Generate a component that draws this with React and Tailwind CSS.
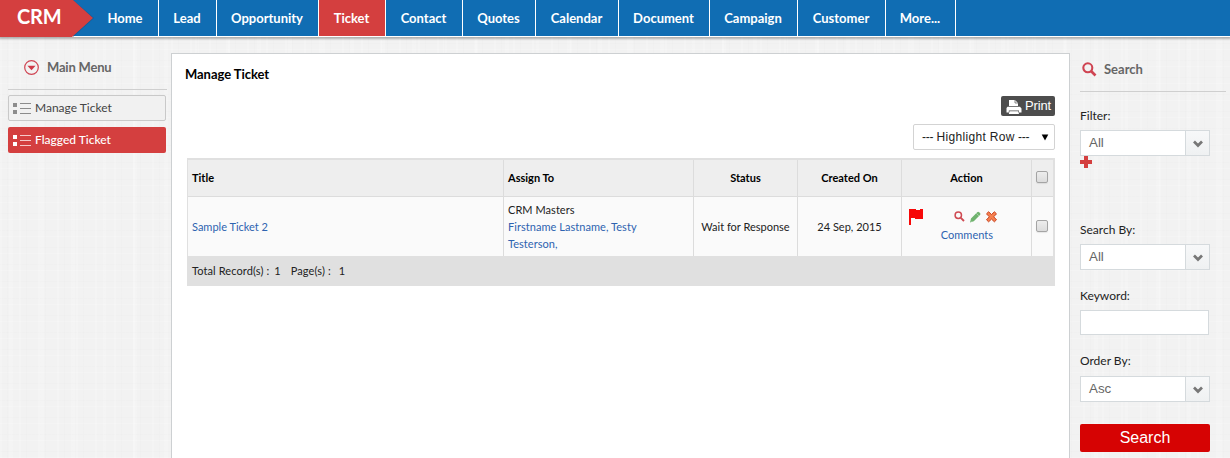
import React from "react";

const NAV = [
  { label: "Home", w: "w-[66px]" },
  { label: "Lead", w: "w-[58px]" },
  { label: "Opportunity", w: "w-[102px]" },
  { label: "Ticket", w: "w-[67px]", active: true },
  { label: "Contact", w: "w-[77px]" },
  { label: "Quotes", w: "w-[73px]" },
  { label: "Calendar", w: "w-[83px]" },
  { label: "Document", w: "w-[91px]" },
  { label: "Campaign", w: "w-[88px]" },
  { label: "Customer", w: "w-[88px]" },
  { label: "More...", w: "w-[70px]" },
];

function Header() {
  return (
    <header className="flex h-[37px] border-b border-white bg-[#106db3] shadow-[0_1px_2px_1px_rgba(0,0,0,0.28)]">
      <div className="relative h-[37px] w-[93px] shrink-0">
        <svg className="absolute inset-0" width="95" height="37" viewBox="0 0 95 37">
          <path d="M73 0L94 18L73 37Z" fill="#0c4f85" opacity="0.55" />
          <path d="M0 0H73L93 18L72 37H0Z" fill="#d43f3f" />
        </svg>
        <span className="relative block pl-[17px] text-[20px] leading-[32px] font-bold tracking-[-0.2px] text-white">CRM</span>
      </div>
      <nav className="flex h-9">
        {NAV.map((n) => (
          <a
            key={n.label}
            className={`flex h-9 items-center justify-center whitespace-nowrap border-r border-white pr-px pt-px text-[13px] font-bold text-white ${n.w} ${n.active ? "bg-[#d43f3f]" : ""}`}
          >
            {n.label}
          </a>
        ))}
      </nav>
    </header>
  );
}

function ListIcon({ color, line }) {
  return (
    <svg width="18" height="12" viewBox="0 0 18 12" shapeRendering="crispEdges">
      <path d="M0 1h4v4H0zM0 8h4v4H0z" fill={color} />
      <path d="M7 1h11v1H7zM7 6h11v1H7zM7 11h11v1H7z" fill={line} />
    </svg>
  );
}

function Sidebar() {
  return (
    <aside className="w-[171px] shrink-0 pl-2">
      <div className="flex h-[53px] w-[159px] items-center border-b border-[#cfcfcf] pl-4 pt-[7px]">
        <svg width="15" height="15" viewBox="0 0 15 15" className="relative top-[1px]">
          <circle cx="7.5" cy="7.5" r="6.8" fill="none" stroke="#cf4452" strokeWidth="1.2" />
          <path d="M3.4 5.8H11.6L7.5 10.2Z" fill="#cf3a48" />
        </svg>
        <span className="ml-2 text-[13px] leading-5 font-bold tracking-[-0.2px] text-[#666]">Main Menu</span>
      </div>
      <div className="mt-[5px] flex h-[26px] w-[158px] items-center rounded-[2px] border border-[#c9c9c9] bg-[#f1f1f1] pl-1 text-[12px] text-[#444]">
        <ListIcon color="#8c8c8c" line="#8c8c8c" />
        <span className="ml-1">Manage Ticket</span>
      </div>
      <div className="mt-[6px] flex h-[26px] w-[158px] items-center rounded-[2px] bg-[#d43f3f] pl-[5px] text-[12px] font-medium text-white">
        <ListIcon color="#fff" line="#f6c9c9" />
        <span className="ml-1">Flagged Ticket</span>
      </div>
    </aside>
  );
}

function Check() {
  return (
    <span className="mt-[-2px] mr-[2px] inline-block size-3 rounded-[2px] border border-[#a4a4a4] bg-linear-to-b from-[#ededed] to-[#dcdcdc] shadow-[0_1px_1px_rgba(0,0,0,0.08)]" />
  );
}

const COLS = "grid grid-cols-[316px_190px_104px_104px_130px_21px]";

function TicketTable() {
  return (
    <div className="ml-[15px] mt-2 h-[128px] w-[868px] border-l border-r-2 border-t-2 border-[#e0e0e0] text-[11px] text-[#222]">
      <div className={`${COLS} h-[37px] w-[865px] border-b border-[#dcdcdc] bg-[#eee] font-bold text-black`}>
        <div className="flex items-center border-r border-[#dcdcdc] pl-1">Title</div>
        <div className="flex items-center border-r border-[#dcdcdc] pl-1">Assign To</div>
        <div className="flex items-center justify-center border-r border-[#dcdcdc]">Status</div>
        <div className="flex items-center justify-center border-r border-[#dcdcdc]">Created On</div>
        <div className="flex items-center justify-center border-r border-[#dcdcdc]">Action</div>
        <div className="flex items-center justify-center"><Check /></div>
      </div>
      <div className={`${COLS} h-[59px] w-[865px] bg-[#fafafa]`}>
        <div className="flex items-center border-r border-[#dcdcdc] pl-1 pt-[2px] text-[#2e63b0]">Sample Ticket 2</div>
        <div className="border-r border-[#dcdcdc] pl-1 pt-1 leading-[17px] tracking-[0.05px]">
          <div>CRM Masters</div>
          <div className="text-[#2e63b0]">Firstname Lastname, Testy<br />Testerson,</div>
        </div>
        <div className="flex items-center justify-center whitespace-nowrap border-r border-[#dcdcdc] pt-[2px]">Wait for Response</div>
        <div className="flex items-center justify-center border-r border-[#dcdcdc] pt-[2px]">24 Sep, 2015</div>
        <div className="flex border-r border-[#dcdcdc] pl-[7px] pt-3">
          <svg width="15" height="16" viewBox="0 0 15 16" className="shrink-0">
            <path d="M0 0H7V1H11V0H14V10H6V9H2V16H0Z" fill="#f70808" />
          </svg>
          <div className="flex w-[69px] flex-col items-end">
            <div className="mr-[-4px] flex h-[17px] gap-[5px] pt-[2px]">
              <svg width="11" height="11" viewBox="0 0 11 11">
                <circle cx="4.3" cy="4.3" r="3.2" fill="none" stroke="#cf4a52" strokeWidth="1.5" />
                <path d="M6.8 6.8L10 10" stroke="#cf4a52" strokeWidth="1.9" />
              </svg>
              <svg width="11" height="12" viewBox="0 0 11 12">
                <path d="M0 11.5L1 7.4L7.2 1.2Q8.2.2 9.2 1.2L10 2Q11 3 10 4L3.8 10.2Z" fill="#70b36f" />
                <path d="M6.2 2.2L8.9 4.9M.8 9.7L1.8 10.7" stroke="#d8ecd5" strokeWidth=".5" />
              </svg>
              <svg width="11" height="12" viewBox="0 0 11 12">
                <path d="M2.6.8L5.5 3.5L8.4.8L10.5 2.8L7.7 5.8L10.5 8.8L8.4 10.8L5.5 8.1L2.6 10.8L.5 8.8L3.3 5.8L.5 2.8Z" fill="#f5804f" stroke="#c9421f" strokeWidth="1" />
              </svg>
            </div>
            <div className="leading-[18px] text-[#2e63b0]">Comments</div>
          </div>
        </div>
        <div className="flex items-center justify-center"><Check /></div>
      </div>
      <div className="flex h-[30px] w-[867px] items-center bg-[#e0e0e0] pl-1 tracking-[0.1px]">
        <span>Total Record(s) :</span>
        <span className="ml-[5px]">1</span>
        <span className="ml-[10px]">Page(s) :</span>
        <span className="ml-2">1</span>
      </div>
    </div>
  );
}

function Main() {
  return (
    <main className="mt-4 w-[899px] shrink-0 border border-b-0 border-[#cdd0d2] bg-white">
      <h1 className="h-[42px] pl-[13px] pt-[10px] text-[13px] leading-5 font-bold tracking-[-0.05px] text-black">Manage Ticket</h1>
      <div className="flex justify-end pr-[14px]">
        <button className="flex h-5 w-[54px] items-center rounded-[2px] bg-[#4d4d4d] pl-[5px] font-['Liberation_Sans',sans-serif] text-[13px] leading-5 tracking-[-0.15px] text-white">
          <svg width="16" height="15" viewBox="0 0 16 15" className="relative top-[1px] shrink-0">
            <path d="M3 0H9L12 3V6H3Z" fill="#fff" />
            <path d="M9 0V3H12" fill="none" stroke="#555" strokeWidth=".7" />
            <path d="M1.5 6.8H14L15.5 8.5V12.5H13V10.5H2.8V12.5H.5V8Z" fill="#fff" />
            <path d="M3.5 11.3H12.3L13 14H2.8Z" fill="#fff" />
          </svg>
          <span className="ml-[3px]">Print</span>
        </button>
      </div>
      <div className="mt-2 flex justify-end pr-[14px]">
        <div className="flex h-[26px] w-[142px] items-center justify-between rounded-[2px] border border-[#d3d3d3] bg-white pl-2 pr-[5px] font-['Liberation_Sans',sans-serif] text-[12px] text-[#222]">
          <span className="whitespace-pre tracking-[-0.2px]">--- <span className="tracking-[0.33px]">Highlight Row</span> ---</span>
          <svg width="8" height="7" viewBox="0 0 8 7"><path d="M.7.5H7.3L4 6.5Z" fill="#000" /></svg>
        </div>
      </div>
      <TicketTable />
    </main>
  );
}

function Select({ value }) {
  return (
    <div className="flex h-[26px] w-[130px] border border-[#d5dadd] bg-white font-['Liberation_Sans',sans-serif] text-[13.33px] text-[#666]">
      <span className="grow pl-2 leading-6">{value}</span>
      <span className="flex w-6 items-center justify-center border-l border-[#d5dadd] bg-linear-to-b from-[#f7f8f9] to-[#eff1f2]">
        <svg width="10" height="8" viewBox="0 0 10 8" className="relative top-[1px]"><path d="M1 1.5L5 5.5L9 1.5" fill="none" stroke="#777" strokeWidth="2.7" /></svg>
      </span>
    </div>
  );
}

function SearchPanel() {
  return (
    <aside className="w-[160px] pl-[10px] text-[12px] text-[#222]">
      <div className="flex h-[55px] w-[146px] items-center border-b border-[#cfcfcf] pl-[2px] pt-[9px]">
        <svg width="15" height="15" viewBox="0 0 15 15" className="relative top-[1px]">
          <circle cx="5.8" cy="5.8" r="4.5" fill="none" stroke="#cf4452" strokeWidth="2.1" />
          <path d="M9 9L13.5 13.5" stroke="#cf4452" strokeWidth="2.6" />
        </svg>
        <span className="ml-[7px] text-[13px] leading-5 font-bold text-[#666]">Search</span>
      </div>
      <div className="mt-[14px] h-[24px] leading-5">Filter:</div>
      <Select value="All" />
      <svg width="12" height="12" viewBox="0 0 12 12"><path d="M4 0h4v4h4v4H8v4H4V8H0V4h4z" fill="#d43f3f" /></svg>
      <div className="mt-[52px] h-[24px] leading-5">Search By:</div>
      <Select value="All" />
      <div className="mt-[16px] h-[24px] leading-5">Keyword:</div>
      <div className="h-[25px] w-[129px] border border-[#d5dadd] bg-white" />
      <div className="mt-[16px] h-[25px] leading-5">Order By:</div>
      <Select value="Asc" />
      <button className="mt-[22px] block h-7 w-[130px] rounded-[2px] bg-[#d60303] font-['Liberation_Sans',sans-serif] text-[16px] leading-7 text-white">Search</button>
    </aside>
  );
}

export default function App() {
  return (
    <div className="h-[458px] w-[1230px] overflow-hidden bg-[#f2f2f2] bg-[repeating-linear-gradient(90deg,rgba(255,255,255,0.18)_0_2px,transparent_2px_7px,rgba(0,0,0,0.008)_7px_8px,transparent_8px_19px),repeating-linear-gradient(0deg,rgba(255,255,255,0.18)_0_1px,transparent_1px_6px,rgba(0,0,0,0.008)_6px_7px,transparent_7px_17px),repeating-linear-gradient(90deg,transparent_0_9px,rgba(255,255,255,0.15)_9px_13px,transparent_13px_31px)] font-['Lato',sans-serif]">
      <Header />
      <div className="flex h-[421px]">
        <Sidebar />
        <Main />
        <SearchPanel />
      </div>
    </div>
  );
}
